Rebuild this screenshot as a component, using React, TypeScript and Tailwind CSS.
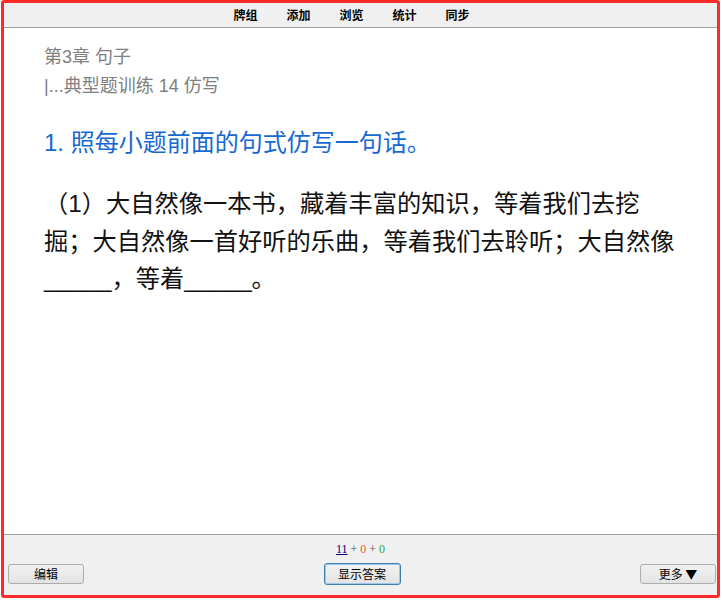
const navItems = ["牌组", "添加", "浏览", "统计", "同步"];

function Btn({ label, focused = false }: { label: string; focused?: boolean }) {
  return (
    <button
      type="button"
      className={`flex items-center justify-center rounded-[3px] border bg-gradient-to-b from-[#f2f2f2] to-[#e3e3e3] text-[12px] text-black ${
        focused ? "h-[22px] w-[77px] border-[#3c7fb1] shadow-[inset_0_0_0_1px_#9cc8ee]" : "h-[20px] w-[76px] border-[#acacac]"
      }`}
      style={{ fontFamily: '"Noto Sans CJK SC", "Liberation Sans", sans-serif' }}
    >
      {label}
    </button>
  );
}

export default function App() {
  return (
    <div className="h-[600px] w-[722px] bg-white pl-[1px]">
      <div className="flex h-[598px] w-[719px] flex-col rounded-[3px] border-[3px] border-[#ff2b2b]">
        {/* top menu */}
        <div
          className="flex h-[25px] items-center justify-center gap-[29px] border-b border-[#a0a0a0] bg-[#f0f0f0] pr-[18px] text-[12px] font-bold leading-none text-black"
          style={{ fontFamily: '"Noto Sans CJK SC", sans-serif' }}
        >
          {navItems.map((item) => (
            <span key={item}>{item}</span>
          ))}
        </div>

        {/* card */}
        <div
          className="flex-1 bg-white px-[40px] pt-[15px]"
          style={{ fontFamily: '"Liberation Sans", "Noto Sans CJK SC", sans-serif' }}
        >
          <div className="text-[18px] leading-[29px] text-[#808080]">第3章 句子</div>
          <div className="text-[18px] leading-[29px] text-[#808080]">|...典型题训练 14 仿写</div>
          <div className="mt-[27px] text-[24px] leading-[30px] text-[#1769d2]">1. 照每小题前面的句式仿写一句话。</div>
          <p className="mt-[27px] text-[24.25px] leading-[37.5px] text-[#111]">
            （1）大自然像一本书，藏着丰富的知识，等着我们去挖掘；大自然像一首好听的乐曲，等着我们去聆听；大自然像_____，等着_____。
          </p>
        </div>

        {/* bottom bar */}
        <div className="flex h-[61px] flex-col border-t border-[#a0a0a0] bg-[#f0f0f0]">
          <div
            className="mt-[7px] flex justify-center gap-[3px] text-[12px] leading-[14px]"
            style={{ fontFamily: '"Liberation Serif", serif' }}
          >
            <span className="text-[#000080] underline">11</span>
            <span className="text-[#555]">+</span>
            <span className="text-[#e0603a]">0</span>
            <span className="text-[#555]">+</span>
            <span className="text-[#2ea84a]">0</span>
          </div>
          <div className="mt-[7px] flex h-[22px] items-center justify-between pl-[4px] pr-[1px]">
            <Btn label="编辑" />
            <Btn label="显示答案" focused />
            <Btn label="更多 ▼" />
          </div>
        </div>
      </div>
    </div>
  );
}
